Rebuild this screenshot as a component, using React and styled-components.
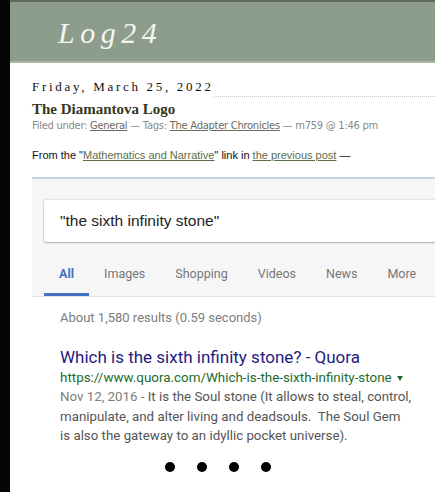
import React from "react";
import styled, { createGlobalStyle } from "styled-components";

const GlobalStyle = createGlobalStyle`
  html, body {
    margin: 0;
    padding: 0;
    background: #ffffff;
  }
  body {
    width: 435px;
    height: 492px;
    overflow: hidden;
  }
`;

const SPage = styled.div`
  display: flex;
  width: 435px;
  height: 492px;
  background: #ffffff;
`;

const SSideBar = styled.div`
  width: 10px;
  flex-shrink: 0;
  background: #050505;
`;

const SMain = styled.div`
  flex: 1;
  min-width: 0;
  display: flex;
  flex-direction: column;
`;

const SHeader = styled.header`
  height: 59px;
  border-top: 2px solid #5f6a5d;
  border-bottom: 2px solid #a9b8a5;
  background: #8d9d8c;
  display: flex;
  align-items: center;
  padding-left: 48px;
`;

const SLogo = styled.h1`
  margin: 2px 0 0;
  font-family: "Liberation Serif", "DejaVu Serif", serif;
  font-style: italic;
  font-weight: 400;
  font-size: 30px;
  letter-spacing: 5.5px;
  color: #f4f6f2;
`;

const SPost = styled.article`
  padding: 16px 0 0 22px;
  display: flex;
  flex-direction: column;
`;

const SDateRow = styled.div`
  display: flex;
  align-items: flex-end;
`;

const SDate = styled.h2`
  margin: 0;
  font-family: "Liberation Serif", serif;
  font-weight: 400;
  font-size: 13px;
  line-height: 16px;
  letter-spacing: 2.7px;
  color: #111;
  white-space: nowrap;
`;

const SDotLine = styled.span`
  flex: 1;
  border-bottom: 1px dotted #c8c8c8;
  margin-bottom: -2px;
`;

const STitle = styled.h3`
  margin: 5px 0 0;
  font-family: "Liberation Serif", serif;
  font-weight: 700;
  font-size: 15px;
  line-height: 18px;
  color: #35361c;
`;

const SMeta = styled.div`
  margin-top: 1px;
  font-family: "DejaVu Sans", Verdana, sans-serif;
  font-size: 10px;
  line-height: 14px;
  letter-spacing: -0.3px;
  color: #8a8a8a;
  white-space: nowrap;
`;

const SMetaLink = styled.a`
  color: #6b6b5e;
  text-decoration: underline;
`;

const SBody = styled.p`
  margin: 15px 0 0;
  font-family: "Liberation Sans", Arial, sans-serif;
  font-size: 11px;
  line-height: 14px;
  color: #111;
  white-space: nowrap;
`;

const SBodyLink = styled.a`
  color: #5b6e4a;
  text-decoration: underline;
`;

const SShot = styled.div`
  margin-top: 15px;
  border-top: 2px solid #c5d5e5;
  font-family: Roboto, "Liberation Sans", Arial, sans-serif;
  overflow: hidden;
`;

const SShotTop = styled.div`
  background: #f6f6f6;
  padding: 21px 0 0 12px;
  border-bottom: 1px solid #e2e2e2;
`;

const SSearchBox = styled.div`
  height: 42px;
  background: #fff;
  border-radius: 2px 0 0 2px;
  box-shadow: 0 1px 2px rgba(0, 0, 0, 0.25), 0 0 0 1px rgba(0, 0, 0, 0.06);
  display: flex;
  align-items: center;
  padding-left: 16px;
  font-family: "Liberation Sans", Arial, sans-serif;
  font-size: 15.5px;
  color: #222;
`;

const STabs = styled.nav`
  display: flex;
  margin-top: 18px;
`;

const STab = styled.div`
  height: 36px;
  box-sizing: border-box;
  padding: 6px 15px 0;
  display: flex;
  align-items: flex-start;
  font-size: 12.5px;
  line-height: 16px;
  font-weight: ${(p) => (p.$active ? 700 : 400)};
  color: ${(p) => (p.$active ? "#4273c8" : "#777")};
  border-bottom: 3px solid ${(p) => (p.$active ? "#4470c4" : "transparent")};
`;

const SResults = styled.div`
  background: #fff;
  padding: 12px 0 0 28px;
`;

const SStats = styled.div`
  font-size: 13px;
  line-height: 18px;
  color: #7d7d7d;
`;

const SResultTitle = styled.a`
  display: block;
  margin-top: 19px;
  font-size: 17px;
  line-height: 22px;
  color: #231c80;
  text-decoration: none;
`;

const SUrl = styled.div`
  display: flex;
  align-items: center;
  gap: 5px;
  font-size: 13.4px;
  line-height: 20px;
  color: #1e6b2c;
  white-space: nowrap;
`;

const SCaret = styled.span`
  width: 0;
  height: 0;
  border-left: 3.5px solid transparent;
  border-right: 3.5px solid transparent;
  border-top: 5px solid #1e6b2c;
  margin-top: 1px;
`;

const SSnippet = styled.div`
  margin-top: -1px;
  font-size: 13.3px;
  line-height: 19.5px;
  color: #555;
  white-space: nowrap;
`;

const SSnipDate = styled.span`
  color: #7d7d7d;
`;

const SDots = styled.div`
  display: flex;
  gap: 22px;
  padding: 16px 0 0 133px;
`;

const SDot = styled.span`
  width: 10px;
  height: 10px;
  border-radius: 50%;
  background: #000;
`;

const tabs = [
  { label: "All", active: true },
  { label: "Images" },
  { label: "Shopping" },
  { label: "Videos" },
  { label: "News" },
  { label: "More" },
];

const App = () => {
  return (
    <>
      <GlobalStyle />
      <SPage>
        <SSideBar />
        <SMain>
          <SHeader>
            <SLogo>Log24</SLogo>
          </SHeader>
          <SPost>
            <SDateRow>
              <SDate>Friday, March 25, 2022</SDate>
              <SDotLine />
            </SDateRow>
            <STitle>The Diamantova Logo</STitle>
            <SMeta>
              Filed under: <SMetaLink>General</SMetaLink> — Tags:{" "}
              <SMetaLink>The Adapter Chronicles</SMetaLink> — m759 @ 1:46 pm
            </SMeta>
            <SBody>
              From the "<SBodyLink>Mathematics and Narrative</SBodyLink>" link in{" "}
              <SBodyLink>the previous post</SBodyLink> —
            </SBody>
            <SShot>
              <SShotTop>
                <SSearchBox>"the sixth infinity stone"</SSearchBox>
                <STabs>
                  {tabs.map((t) => (
                    <STab key={t.label} $active={t.active}>
                      {t.label}
                    </STab>
                  ))}
                </STabs>
              </SShotTop>
              <SResults>
                <SStats>About 1,580 results (0.59 seconds)</SStats>
                <SResultTitle>Which is the sixth infinity stone? - Quora</SResultTitle>
                <SUrl>
                  https://www.quora.com/Which-is-the-sixth-infinity-stone
                  <SCaret />
                </SUrl>
                <SSnippet>
                  <SSnipDate>Nov 12, 2016 - </SSnipDate>It is the Soul stone (It allows to steal, control,
                  <br />
                  manipulate, and alter living and deadsouls.&nbsp; The Soul Gem
                  <br />
                  is also the gateway to an idyllic pocket universe).
                </SSnippet>
              </SResults>
              <SDots>
                <SDot />
                <SDot />
                <SDot />
                <SDot />
              </SDots>
            </SShot>
          </SPost>
        </SMain>
      </SPage>
    </>
  );
};

export default App;
